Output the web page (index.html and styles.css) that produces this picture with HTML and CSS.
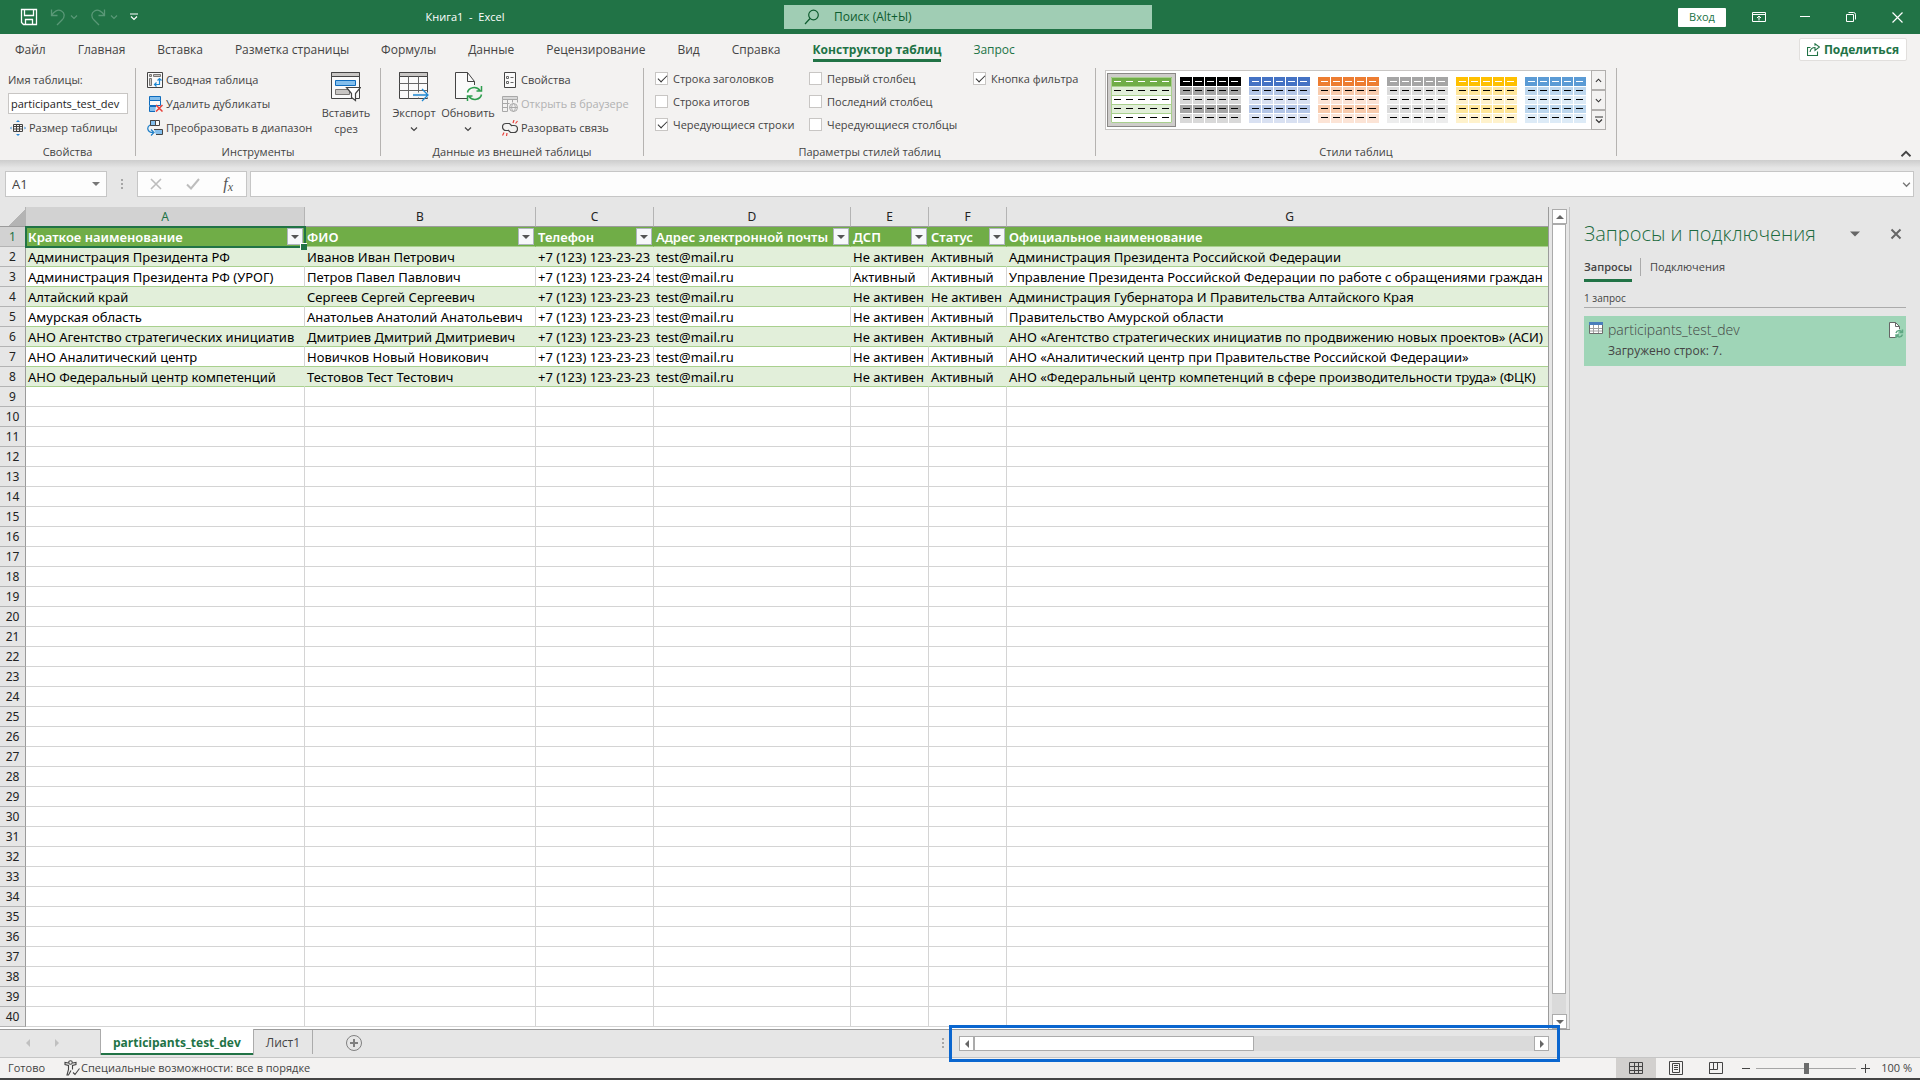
FILE: index.html
```html
<!DOCTYPE html>
<html lang="ru">
<head>
<meta charset="utf-8">
<title>Книга1 - Excel</title>
<link rel="stylesheet" href="styles.css">
</head>
<body>
<svg class="defs" width="0" height="0" aria-hidden="true">
  <symbol id="swatch" viewBox="0 0 61 46">
    <path fill="var(--head)" d="M0 0h61v9H0z"/>
    <path fill="var(--odd)" d="M0 10h61v8H0zM0 28h61v8H0z"/>
    <path fill="var(--even)" d="M0 19h61v8H0zM0 37h61v9H0z"/>
    <path stroke="var(--grid)" d="M12.500 0v46M24.500 0v46M36.500 0v46M48.500 0v46"/>
    <path stroke="#fff" stroke-dasharray="7 5" d="M3 4.500h55"/>
    <path stroke="#000" stroke-dasharray="7 5" d="M3 13.500h55M3 22.500h55M3 31.500h55M3 40.500h55"/>
    <path fill="none" stroke="var(--line)" d="M.5 9.500h60M.5 18.500h60M.5 27.500h60M.5 36.500h60M.5.5h60v45H.5z"/>
  </symbol>
  <symbol id="chev-down" viewBox="0 0 8 8"><path d="M1 2.500l3 3 3-3" fill="none" stroke="currentColor" stroke-width="1.200"/></symbol>
  <symbol id="chev-up" viewBox="0 0 8 8"><path d="M1 5.500l3-3 3 3" fill="none" stroke="currentColor" stroke-width="1.200"/></symbol>
  <symbol id="tri-down" viewBox="0 0 8 8"><path d="M0 2h8L4 6z" fill="currentColor"/></symbol>
  <symbol id="tri-up" viewBox="0 0 8 8"><path d="M0 6h8L4 2z" fill="currentColor"/></symbol>
  <symbol id="tri-left" viewBox="0 0 8 8"><path d="M6 0v8L2 4z" fill="currentColor"/></symbol>
  <symbol id="tri-right" viewBox="0 0 8 8"><path d="M2 0v8l4-4z" fill="currentColor"/></symbol>
</svg>

<header class="titlebar">
  <div class="quick">
    <button type="button" class="bare" aria-label="Сохранить"><svg width="18" height="18" viewBox="0 0 18 18" fill="none" stroke="#fff" stroke-width="1.300"><path d="M1.500 1.500h15v15h-13l-2-2zM4.500 1.500v6h9v-6M5.500 16.500v-5h7v5"/></svg></button>
    <div class="history">
      <button type="button" class="bare" aria-label="Отменить" disabled><svg width="16" height="18" viewBox="0 0 16 18" fill="none" stroke="currentColor" stroke-width="1.300"><path d="M1.500 1.500v6h6M1.500 7.500C4 3 8 1 11.500 3s3.500 6 .5 9l-5 5"/></svg></button>
      <svg width="8" height="8"><use href="#chev-down"/></svg>
    </div>
    <div class="history">
      <button type="button" class="bare" aria-label="Вернуть" disabled><svg width="16" height="18" viewBox="0 0 16 18" fill="none" stroke="currentColor" stroke-width="1.300"><path d="M14.500 1.500v6h-6M14.500 7.500C12 3 8 1 4.500 3S1 9 4 12l5 5"/></svg></button>
      <svg width="8" height="8"><use href="#chev-down"/></svg>
    </div>
    <button type="button" class="bare" aria-label="Настройка панели"><svg width="8" height="8" viewBox="0 0 8 8" fill="none" stroke="#fff" stroke-width="1.200"><path d="M0 1h8M1 3.500L4 6.500l3-3"/></svg></button>
  </div>
  <div class="doc-title">Книга1&nbsp; -&nbsp; Excel</div>
  <label class="search">
    <svg width="16" height="16" viewBox="0 0 16 16" fill="none" stroke="#0e5c2f" stroke-width="1.200"><circle cx="9.500" cy="6" r="4.800"/><path d="M6 9.500L1 15"/></svg>
    <input type="text" placeholder="Поиск (Alt+Ы)" aria-label="Поиск">
  </label>
  <div class="window">
    <button type="button" class="login">Вход</button>
    <button type="button" class="win" aria-label="Параметры ленты"><svg width="14" height="12" viewBox="0 0 14 12" fill="none" stroke="#fff"><path d="M.5 1.500h13v9H.5zM.5 3.500h13M7 9.500v-4M5 7l2-2 2 2"/></svg></button>
    <button type="button" class="win" aria-label="Свернуть"><svg width="10" height="10" viewBox="0 0 10 10" stroke="#fff"><path d="M0 4.500h10"/></svg></button>
    <button type="button" class="win" aria-label="Восстановить"><svg width="10" height="10" viewBox="0 0 10 10" fill="none" stroke="#fff"><path d="M.5 2.500h7v7h-7zM2.500.5h5q2 0 2 2v5"/></svg></button>
    <button type="button" class="win" aria-label="Закрыть"><svg width="11" height="11" viewBox="0 0 11 11" stroke="#fff" stroke-width="1.200"><path d="M.5.5l10 10M10.500.5l-10 10"/></svg></button>
  </div>
</header>

<nav class="tabs">
  <a href="#">Файл</a><a href="#">Главная</a><a href="#">Вставка</a><a href="#">Разметка страницы</a><a href="#">Формулы</a><a href="#">Данные</a><a href="#">Рецензирование</a><a href="#">Вид</a><a href="#">Справка</a><a href="#" class="active">Конструктор таблиц</a><a href="#" class="context">Запрос</a>
  <button type="button" class="share"><svg width="13" height="13" viewBox="0 0 13 13" fill="none" stroke="#217346" stroke-width="1.100"><path d="M3.500 4.500h-3v8h10v-4M3 9c.5-3 2.500-4.500 5-4.500V7.500L12.500 4 8 .8v2"/></svg>Поделиться</button>
</nav>

<section class="ribbon">
  <div class="group g-props">
    <div class="body rows">
      <label class="small" for="tname">Имя таблицы:</label>
      <input id="tname" class="tname" type="text" value="participants_test_dev">
      <button type="button" class="small resize"><svg width="16" height="16" viewBox="0 0 16 16" fill="none" stroke="#444"><path d="M3.500 4.500h9v7h-9zM3.500 6.500h9M6.500 4.500v7M9.500 4.500v7M3.500 9h9"/><path fill="#2b88d8" stroke="none" d="M8 0l2 2H6zM8 16l2-2H6zM0 8l1.500-1.500v3zM16 8l-1.500-1.500v3z"/></svg>Размер таблицы</button>
    </div>
    <div class="caption">Свойства</div>
  </div>
  <span class="sep"></span>
  <div class="group g-tools">
    <div class="body">
      <div class="rows">
        <button type="button" class="small"><svg width="16" height="16" viewBox="0 0 16 16" fill="none" stroke="#444"><path d="M.5.5h15v15H.5z" fill="#fafafa"/><path d="M2.500 2.500h2v2h-2zM6.500 2.500h7v2h-7zM2.500 6.500h2v7h-2z" fill="#c8c6c4" stroke="#797775"/><path stroke="#1e88d2" stroke-width="1.200" d="M12.500 7v5.500H8M10.500 8.500l2-2 2 2M9.500 10.500l-2 2 2 2"/></svg>Сводная таблица</button>
        <button type="button" class="small"><svg width="16" height="16" viewBox="0 0 16 16" fill="none" stroke="#0f6cbd"><path d="M2.500.5h11v4h-11z" fill="#83beec"/><path d="M2.500 4.500h11v5h-11z" fill="#fafafa"/><path d="M8 15.500H2.500v-5H9" fill="#83beec"/><path stroke="#e8403a" stroke-width="1.500" d="M9 9l6.500 6.500M15.500 9L9 15.500"/></svg>Удалить дубликаты</button>
        <button type="button" class="small"><svg width="16" height="16" viewBox="0 0 16 16" fill="none" stroke="#444"><path d="M3.500.5h9v5h-9z" fill="#fafafa"/><path d="M3.500.5h5v5h-5z" fill="#83beec"/><path d="M7 9.500h8.500v5H9" fill="#83beec"/><path stroke="#1e7fc8" stroke-width="1.200" d="M3 5C-.5 7 0 12.500 6 12.500M4 9.500l3 3-3 3"/></svg>Преобразовать в диапазон</button>
      </div>
      <button type="button" class="big"><svg width="30" height="32" viewBox="0 0 30 32" fill="none" stroke="#444"><path d="M.5 1.500h28v26H.5z" fill="#fafafa"/><path d="M.5 1.500h28v4H.5z" fill="#c8c6c4"/><path d="M4.500 9.500h20v5h-20z" fill="#83beec" stroke="#0f6cbd"/><path d="M4.500 18.500h14v5h-14z" fill="#c8c6c4" stroke="#797775"/><path d="M15.500 16.500h14l-5 6v7l-4-3v-4z" fill="#fff" stroke-width="1.200"/></svg><span>Вставить<br>срез</span></button>
    </div>
    <div class="caption">Инструменты</div>
  </div>
  <span class="sep"></span>
  <div class="group g-data">
    <div class="body">
      <button type="button" class="big"><svg width="30" height="32" viewBox="0 0 30 32" fill="none" stroke="#444"><path d="M.5 1.500h28v26H.5z" fill="#fafafa"/><path d="M.5 1.500h28v4H.5z" fill="#c8c6c4"/><path stroke="#666" d="M.5 12.500h28M.5 19.500h28M9.500 5.500v22M19.500 5.500v22"/><path stroke="#f3f2f1" stroke-width="5" d="M14 24h16"/><path stroke="#1e88d2" stroke-width="1.300" d="M14 24h15M23 18l6 6-6 6"/></svg><span>Экспорт</span><svg width="8" height="8"><use href="#chev-down"/></svg></button>
      <button type="button" class="big"><svg width="30" height="32" viewBox="0 0 30 32" fill="none" stroke="#444"><path d="M15 27.500H2.500v-26h12l7 9V14" fill="#fafafa"/><path d="M14.500 1.500v9h7"/><path stroke="#2f9e4f" stroke-width="1.500" d="M14.500 21.500c1-5 8.500-7 12.500-2M28.500 15v5h-5M28.500 23.500c-1 5-8.500 7-12.500 2M14.500 30v-5h5"/></svg><span>Обновить</span><svg width="8" height="8"><use href="#chev-down"/></svg></button>
      <div class="rows">
        <button type="button" class="small"><svg width="16" height="16" viewBox="0 0 16 16" fill="none" stroke="#444"><path d="M2.500.5h11v15h-11z" fill="#fafafa"/><path stroke="#666" d="M4.500 4.500h2v2h-2zM4.500 9.500h2v2h-2zM8.500 5.500h3M8.500 10.500h3"/></svg>Свойства</button>
        <button type="button" class="small" disabled><svg width="16" height="16" viewBox="0 0 16 16" fill="none" stroke="#a8a8a8"><path d="M.5.500h15v3H.5z" fill="#d8d8d8"/><path d="M.5 3.500v12h5M.5 7.500h7M.5 11.500h5M5.500 3.500v12M10.500 3.500v3M15.500 3.500v3"/><circle cx="11.500" cy="11.500" r="4" fill="#f3f2f1"/><path d="M7.500 11.500h8M11.500 7.500c-2.500 2.500-2.500 5.500 0 8 2.500-2.500 2.500-5.500 0-8"/></svg>Открыть в браузере</button>
        <button type="button" class="small"><svg width="16" height="16" viewBox="0 0 16 16" fill="none" stroke="#444" stroke-width="1.200"><path d="M7 10.500H4a3.500 3.500 0 010-7h3.500L10 6M9 5.500h3a3.500 3.500 0 010 7H8.500L6 10"/><path stroke="#e8403a" d="M11 3l1-3M13.500 3.500L15.500 1M2 12.500L.5 15.500M5 13l-.5 3"/></svg>Разорвать связь</button>
      </div>
    </div>
    <div class="caption">Данные из внешней таблицы</div>
  </div>
  <span class="sep"></span>
  <div class="group g-options">
    <div class="body checks">
      <label><input type="checkbox" checked>Строка заголовков</label>
      <label><input type="checkbox">Строка итогов</label>
      <label><input type="checkbox" checked>Чередующиеся строки</label>
      <label><input type="checkbox">Первый столбец</label>
      <label><input type="checkbox">Последний столбец</label>
      <label><input type="checkbox">Чередующиеся столбцы</label>
      <label><input type="checkbox" checked>Кнопка фильтра</label>
    </div>
    <div class="caption">Параметры стилей таблиц</div>
  </div>
  <span class="sep"></span>
  <div class="group g-styles">
    <div class="body">
      <div class="gallery">
        <button type="button" class="style green selected" aria-label="Зелёный"><svg width="61" height="46"><use href="#swatch"/></svg></button>
        <button type="button" class="style black" aria-label="Чёрный"><svg width="61" height="46"><use href="#swatch"/></svg></button>
        <button type="button" class="style blue" aria-label="Синий"><svg width="61" height="46"><use href="#swatch"/></svg></button>
        <button type="button" class="style orange" aria-label="Оранжевый"><svg width="61" height="46"><use href="#swatch"/></svg></button>
        <button type="button" class="style gray" aria-label="Серый"><svg width="61" height="46"><use href="#swatch"/></svg></button>
        <button type="button" class="style yellow" aria-label="Жёлтый"><svg width="61" height="46"><use href="#swatch"/></svg></button>
        <button type="button" class="style sky" aria-label="Голубой"><svg width="61" height="46"><use href="#swatch"/></svg></button>
        <div class="stepper">
          <button type="button" aria-label="Вверх"><svg width="7" height="7"><use href="#chev-up"/></svg></button>
          <button type="button" aria-label="Вниз"><svg width="7" height="7"><use href="#chev-down"/></svg></button>
          <button type="button" aria-label="Ещё"><svg width="8" height="8" viewBox="0 0 8 8" fill="none" stroke="currentColor" stroke-width="1.200"><path d="M0 1h8M1 3.500L4 6.500l3-3"/></svg></button>
        </div>
      </div>
    </div>
    <div class="caption">Стили таблиц</div>
  </div>
  <span class="sep"></span>
  <button type="button" class="bare collapse" aria-label="Свернуть ленту"><svg width="12" height="12"><use href="#chev-up"/></svg></button>
</section>

<div class="formula-row">
  <div class="box name-box"><input type="text" value="A1" aria-label="Имя"><svg width="8" height="8"><use href="#tri-down"/></svg></div>
  <svg class="dots" width="3" height="12" viewBox="0 0 3 12" fill="#a6a6a6"><path d="M0 1h2v2H0zM0 5h2v2H0zM0 9h2v2H0z"/></svg>
  <div class="box fx">
    <svg width="12" height="12" viewBox="0 0 12 12" stroke="#bdbdbd" stroke-width="1.600"><path d="M1 1l10 10M11 1L1 11"/></svg>
    <svg width="14" height="12" viewBox="0 0 14 12" fill="none" stroke="#bdbdbd" stroke-width="2"><path d="M1 6.500l4 4L13 1"/></svg>
    <span class="fx-label">f<sub>x</sub></span>
  </div>
  <div class="box formula"><input type="text" aria-label="Строка формул"><svg width="9" height="9"><use href="#chev-down"/></svg></div>
</div>

<main class="workspace">
  <section class="book">
    <div class="sheet-area">
      <div class="sheet">
        <table>
          <colgroup><col class="c-num"><col class="c-a"><col class="c-b"><col class="c-c"><col class="c-d"><col class="c-e"><col class="c-f"><col></colgroup>
          <thead>
            <tr class="letters"><th class="corner"></th><th class="current">A</th><th>B</th><th>C</th><th>D</th><th>E</th><th>F</th><th>G</th></tr>
          </thead>
          <tbody id="grid">
            <tr class="names"><th class="current">1</th><td class="cell-active">Краткое наименование<button type="button" class="filter" aria-label="Фильтр"><svg width="8" height="8"><use href="#tri-down"/></svg></button></td><td>ФИО<button type="button" class="filter" aria-label="Фильтр"><svg width="8" height="8"><use href="#tri-down"/></svg></button></td><td>Телефон<button type="button" class="filter" aria-label="Фильтр"><svg width="8" height="8"><use href="#tri-down"/></svg></button></td><td>Адрес электронной почты<button type="button" class="filter" aria-label="Фильтр"><svg width="8" height="8"><use href="#tri-down"/></svg></button></td><td>ДСП<button type="button" class="filter" aria-label="Фильтр"><svg width="8" height="8"><use href="#tri-down"/></svg></button></td><td>Статус<button type="button" class="filter" aria-label="Фильтр"><svg width="8" height="8"><use href="#tri-down"/></svg></button></td><td>Официальное наименование</td></tr>
            <tr class="data band"><th>2</th><td>Администрация Президента РФ</td><td>Иванов Иван Петрович</td><td>+7 (123) 123-23-23</td><td>test@mail.ru</td><td>Не активен</td><td>Активный</td><td>Администрация Президента Российской Федерации</td></tr>
            <tr class="data"><th>3</th><td>Администрация Президента РФ (УРОГ)</td><td>Петров Павел Павлович</td><td>+7 (123) 123-23-24</td><td>test@mail.ru</td><td>Активный</td><td>Активный</td><td>Управление Президента Российской Федерации по работе с обращениями граждан</td></tr>
            <tr class="data band"><th>4</th><td>Алтайский край</td><td>Сергеев Сергей Сергеевич</td><td>+7 (123) 123-23-23</td><td>test@mail.ru</td><td>Не активен</td><td>Не активен</td><td>Администрация Губернатора И Правительства Алтайского Края</td></tr>
            <tr class="data"><th>5</th><td>Амурская область</td><td>Анатольев Анатолий Анатольевич</td><td>+7 (123) 123-23-23</td><td>test@mail.ru</td><td>Не активен</td><td>Активный</td><td>Правительство Амурской области</td></tr>
            <tr class="data band"><th>6</th><td>АНО Агентство стратегических инициатив</td><td>Дмитриев Дмитрий Дмитриевич</td><td>+7 (123) 123-23-23</td><td>test@mail.ru</td><td>Не активен</td><td>Активный</td><td>АНО «Агентство стратегических инициатив по продвижению новых проектов» (АСИ)</td></tr>
            <tr class="data"><th>7</th><td>АНО Аналитический центр</td><td>Новичков Новый Новикович</td><td>+7 (123) 123-23-23</td><td>test@mail.ru</td><td>Не активен</td><td>Активный</td><td>АНО «Аналитический центр при Правительстве Российской Федерации»</td></tr>
            <tr class="data band"><th>8</th><td>АНО Федеральный центр компетенций</td><td>Тестовов Тест Тестович</td><td>+7 (123) 123-23-23</td><td>test@mail.ru</td><td>Не активен</td><td>Активный</td><td>АНО «Федеральный центр компетенций в сфере производительности труда» (ФЦК)</td></tr>
          </tbody>
        </table>
      </div>
      <div class="vscroll">
        <button type="button" aria-label="Вверх"><svg width="8" height="8"><use href="#tri-up"/></svg></button>
        <div class="vtrack"><div class="vthumb"></div></div>
        <button type="button" aria-label="Вниз"><svg width="8" height="8"><use href="#tri-down"/></svg></button>
      </div>
    </div>
    <div class="sheetbar">
      <div class="tab-arrows"><svg width="8" height="8"><use href="#tri-left"/></svg><svg width="8" height="8"><use href="#tri-right"/></svg></div>
      <a href="#" class="sheet-tab on">participants_test_dev</a>
      <a href="#" class="sheet-tab">Лист1</a>
      <button type="button" class="bare add" aria-label="Новый лист"><svg width="18" height="18" viewBox="0 0 18 18" fill="none" stroke="#808080"><circle cx="9" cy="9" r="7.500"/><path stroke-width="2" d="M9 5v8M5 9h8"/></svg></button>
      <svg class="dots grip" width="3" height="12" viewBox="0 0 3 12" fill="#a6a6a6"><path d="M0 1h2v2H0zM0 5h2v2H0zM0 9h2v2H0z"/></svg>
      <div class="hscroll">
        <button type="button" aria-label="Влево"><svg width="8" height="8"><use href="#tri-left"/></svg></button>
        <div class="htrack"><div class="hthumb"></div></div>
        <button type="button" aria-label="Вправо"><svg width="8" height="8"><use href="#tri-right"/></svg></button>
        <span class="marker"></span>
      </div>
    </div>
  </section>
  <aside class="pane">
    <div class="pane-head">
      <h2>Запросы и подключения</h2>
      <svg width="10" height="10"><use href="#tri-down"/></svg>
      <button type="button" class="bare" aria-label="Закрыть"><svg width="12" height="12" viewBox="0 0 12 12" stroke="#666" stroke-width="2"><path d="M1.500 1.500l9 9M10.500 1.500l-9 9"/></svg></button>
    </div>
    <div class="pane-tabs"><a href="#" class="on">Запросы</a><a href="#">Подключения</a></div>
    <div class="count">1 запрос</div>
    <div class="query">
      <svg width="14" height="14" viewBox="0 0 14 14" fill="none" stroke="#6b6b6b"><path d="M.5 1.500h13v11H.5z" fill="#fff"/><path stroke="#a0a0a0" d="M1 7.500h12M1 10h12M4.500 4v8M9.500 4v8"/><path fill="#4a7ebb" stroke="none" d="M0 1h14v3H0z"/></svg>
      <div class="query-text"><div class="query-name">participants_test_dev</div><div>Загружено строк: 7.</div></div>
      <svg width="16" height="18" viewBox="0 0 16 18" fill="none" stroke="#666"><path d="M8 16.500H1.500v-15h6l4 4V8" fill="#fff"/><path d="M7.500 1.500v4h4"/><path stroke="#5fa783" stroke-width="1.500" d="M8 12c1-3 4-3 6-1M14.500 8.500v3h-3M14.500 13.500c-1 3-4 3-6 1M8 17v-3h3"/></svg>
    </div>
  </aside>
</main>

<footer class="status">
  <span>Готово</span>
  <button type="button" class="bare access"><svg width="16" height="16" viewBox="0 0 16 16" fill="none" stroke="#444" stroke-width="1.100"><circle cx="6.500" cy="2.500" r="1.800"/><path d="M4.500 3L1 2.500v2l3.500 1v4L3 15h1.500L7 10.500M8.500 3L12 2.500v2l-3.500 1v4M9 12.500l2 2 4.500-6"/></svg>Специальные возможности: все в порядке</button>
  <div class="views">
    <button type="button" class="view on" aria-label="Обычный"><svg width="14" height="14" viewBox="0 0 14 14" fill="none" stroke="#444"><path d="M.5 1.500h13v11H.5zM.5 5.500h13M.5 9.500h13M5.500 1.500v11M9.500 1.500v11"/></svg></button>
    <button type="button" class="view" aria-label="Разметка страницы"><svg width="14" height="14" viewBox="0 0 14 14" fill="none" stroke="#444"><path d="M.5.5h13v13H.5zM3.500 2.500h7v9h-7zM5 4.500h4M5 6.500h4M5 8.500h4"/></svg></button>
    <button type="button" class="view" aria-label="Страничный режим"><svg width="14" height="14" viewBox="0 0 14 14" fill="none" stroke="#444"><path d="M.5 13V1.500h13v11H.5M.5 8.500h8v-7M4.500 1.500v7"/></svg></button>
  </div>
  <div class="zoom">
    <button type="button" class="bare" aria-label="Уменьшить"><svg width="9" height="9" viewBox="0 0 9 9" stroke="#444"><path d="M0 4.500h8"/></svg></button>
    <input type="range" min="0" max="100" value="50" aria-label="Масштаб">
    <button type="button" class="bare" aria-label="Увеличить"><svg width="9" height="9" viewBox="0 0 9 9" stroke="#444"><path d="M0 4.500h9M4.500 0v9"/></svg></button>
    <span>100 %</span>
  </div>
</footer>
<script src="script.js"></script>
</body>
</html>
```
FILE: styles.css
```css
* { box-sizing: border-box; }
body {
  margin: 0;
  height: 100vh;
  display: flex;
  flex-direction: column;
  overflow: hidden;
  background: #e6e6e6;
  color: #444;
  font: 11px/16px "Open Sans", "Noto Sans", sans-serif;
}
button, input { font: inherit; color: inherit; }
button { padding: 0; border: 0; background: none; }
input { border: 0; outline: 0; padding: 0; min-width: 0; }
a { color: inherit; text-decoration: none; }
svg { display: block; flex: none; }
.defs { position: absolute; }
.bare { display: flex; align-items: center; }

/* Title bar */
.titlebar {
  flex: none;
  height: 34px;
  display: grid;
  grid-template-columns: 358px 214px 212px minmax(200px, 368px) 1fr;
  align-items: center;
  background: #217346;
  color: #fff;
  font-size: 12px;
}
.quick { display: flex; align-items: center; gap: 12px; padding-left: 20px; }
.history { display: flex; align-items: center; gap: 4px; color: #5a9877; }
.history .bare { color: inherit; }
.doc-title { text-align: center; font-size: 11px; }
.search {
  grid-column: 4;
  height: 24px;
  display: flex;
  align-items: center;
  gap: 14px;
  padding-left: 20px;
  background: #a0cdb4;
}
.search input { flex: 1; background: none; color: #0e5c2f; font-size: 12px; }
.search input::placeholder { color: #0e5c2f; opacity: 1; }
.window { display: flex; align-items: center; justify-content: flex-end; }
.login { width: 48px; height: 19px; margin-right: 10px; background: #fff; color: #217346; font-size: 11px; border-radius: 1px; }
.win { width: 46px; height: 34px; display: grid; place-items: center; }

/* Ribbon tabs */
.tabs {
  flex: none;
  height: 34px;
  display: flex;
  align-items: flex-start;
  gap: 32px;
  padding: 0 13px 0 15px;
  background: #f3f2f1;
  font-size: 12px;
}
.tabs a { margin-top: 8px; padding-bottom: 1px; border-bottom: 3px solid transparent; white-space: nowrap; }
.tabs .active { color: #217346; font-weight: 700; border-color: #217346; }
.tabs .context { color: #217346; }
.share {
  margin: 4px 0 0 auto;
  height: 23px;
  display: flex;
  align-items: center;
  gap: 4px;
  padding: 0 7px;
  background: #fff;
  border: 1px solid #e1dfdd;
  border-radius: 2px;
  color: #217346;
  font-weight: 700;
}

/* Ribbon body */
.ribbon { flex: none; height: 92px; display: flex; background: #f3f2f1; }
.sep { flex: none; width: 1px; height: 88px; background: #b5b3b1; }
.group { flex: none; display: flex; flex-direction: column; }
.body { flex: 1; display: flex; }
.caption { height: 16px; text-align: center; }
.g-props { width: 135px; padding: 0 8px; }
.g-tools { width: 244px; }
.g-data { width: 262px; }
.g-options { width: 451px; }
.g-styles { width: 520px; }
.rows { display: flex; flex-direction: column; }
.small { height: 24px; display: flex; align-items: center; gap: 3px; white-space: nowrap; }
.small:disabled { color: #b1b1b1; }
.resize { padding-left: 2px; }
.tname { width: 120px; height: 21px; margin: 1px 0 2px; padding-left: 2px; background: #fff; border: 1px solid #c8c6c4; color: #222; }
.g-tools .rows { width: 177px; padding-left: 11px; }
.g-tools .big { width: 66px; }
.big { display: flex; flex-direction: column; align-items: center; padding-top: 3px; }
.big span { margin-top: 2px; }
.big span + svg { margin-top: 4px; }
.g-data .big { width: 54px; }
.g-data .body { padding-left: 6px; }
.g-data .rows { padding-left: 7px; }
.checks {
  display: grid;
  grid-auto-flow: column;
  grid-template: repeat(3, 23px) / 154px 164px auto;
  margin-top: -1px;
  padding-left: 11px;
}
.checks label { display: flex; align-items: center; gap: 5px; white-space: nowrap; }
input[type="checkbox"] { appearance: none; flex: none; width: 13px; height: 13px; margin: 0; background: #fff; border: 1px solid #c8c6c4; }
input[type="checkbox"]:checked::after {
  content: "";
  display: block;
  width: 8px;
  height: 4px;
  margin: 2px 0 0 2px;
  border: solid #333;
  border-width: 0 0 1px 1px;
  transform: rotate(-45deg);
}
.g-styles .body { padding: 2px 10px 0 9px; }
.gallery { flex: 1; height: 60px; display: flex; padding: 2px 0 2px 1px; background: #fff; border: 1px solid #c8c6c4; }
.style { width: 69px; height: 54px; display: grid; place-items: center; --grid: #fff; --line: transparent; }
.selected { background: #cfcdcb; outline: 1px solid #8a8886; outline-offset: -1px; }
.green { --head: #70ad47; --odd: #e2efda; --even: #fff; --grid: transparent; --line: #a9d08e; }
.black { --head: #000; --odd: #a6a6a6; --even: #d9d9d9; }
.blue { --head: #4472c4; --odd: #b4c6e7; --even: #d9e1f2; }
.orange { --head: #ed7d31; --odd: #f8cbad; --even: #fce4d6; }
.gray { --head: #a5a5a5; --odd: #dbdbdb; --even: #ededed; }
.yellow { --head: #ffc000; --odd: #ffe699; --even: #fff2cc; }
.sky { --head: #5b9bd5; --odd: #bdd7ee; --even: #ddebf7; }
.stepper { flex: none; width: 15px; margin: -3px -1px -3px auto; display: flex; flex-direction: column; }
.stepper button { flex: 1; display: grid; place-items: center; background: #f3f2f1; border: 1px solid #b1afad; color: #333; }
.collapse { margin: auto 8px 0 auto; }

/* Formula bar */
.formula-row {
  flex: none;
  height: 47px;
  display: flex;
  padding: 11px 6px 10px 5px;
  background: linear-gradient(#cdcdcd, #e6e6e6 8px);
}
.box { height: 26px; display: flex; align-items: center; background: #fdfdfd; border: 1px solid #c6c6c6; color: #777; }
.name-box { width: 102px; padding: 0 6px; }
.name-box input { flex: 1; font-size: 13px; color: #444; background: none; }
.formula-row .dots { margin: 7px 13px 0 14px; }
.fx { width: 110px; padding: 0 13px 0 12px; justify-content: space-between; }
.fx-label { font: italic 16px/20px "Liberation Serif", serif; color: #555; }
.fx-label sub { font-size: 12px; line-height: 1px; vertical-align: -2px; }
.formula { flex: 1; margin-left: 3px; padding-right: 2px; }
.formula input { flex: 1; background: none; }

/* Workbook */
.workspace { flex: 1; display: flex; min-height: 0; }
.book { flex: 1; min-width: 0; display: flex; flex-direction: column; }
.sheet-area { flex: 1; min-height: 0; display: flex; }
.sheet { flex: 1; min-width: 0; overflow: hidden; background: #fff; border-right: 1px solid #9b9b9b; }
table { width: 100%; table-layout: fixed; border-collapse: separate; border-spacing: 0; font: 13px/18px "Noto Sans", "Open Sans", sans-serif; color: #000; }
.c-num { width: 26px; }
.c-a { width: 279px; }
.c-b { width: 231px; }
.c-c { width: 118px; }
.c-d { width: 197px; }
.c-e, .c-f { width: 78px; }
tr { height: 20px; }
td { height: 20px; padding: 0 0 0 2px; border: solid #d4d4d4; border-width: 0 1px 1px 0; white-space: nowrap; overflow: hidden; }
th { height: 20px; padding: 0; font-weight: 400; font-size: 12px; color: #222; background: #e6e6e6; border: solid #b4b4b4; border-width: 0 1px 1px 0; }
tbody th { border-right-color: #9b9b9b; }
.letters th { border-bottom-color: #9b9b9b; }
.letters th:last-child, td:last-child { border-right: 0; }
.letters th:last-child { padding-left: 24px; }
th.current { background: #d2d2d2; color: #217346; }
.corner { background: linear-gradient(135deg, #e6e6e6 63%, #b4b4b4 63%); }
.names td { position: relative; background: #70ad47; border-color: #a9d08e; border-right-color: #70ad47; color: #fff; font-weight: 600; }
.data td { border-bottom-color: #a9d08e; }
.band td { background: #e2efda; border-right-color: #e2efda; }
.names .cell-active { overflow: visible; }
.cell-active::before { content: ""; position: absolute; z-index: 1; inset: -1px -2px -2px -1px; border: 2px solid #217346; pointer-events: none; }
.cell-active::after { content: ""; position: absolute; z-index: 1; right: -3px; bottom: -4px; width: 6px; height: 6px; background: #217346; border: 1px solid #fff; border-width: 1px 0 0 1px; }
.filter { position: absolute; top: 1px; right: 1px; width: 16px; height: 17px; display: grid; place-items: center; background: #f7f8fa; border: 1px solid #b0b5bf; color: #555; }

.vscroll { flex: none; width: 21px; display: flex; flex-direction: column; padding: 2px 3px 0; border-right: 1px solid #c3c3c3; }
.vscroll button, .hscroll button { flex: none; width: 15px; height: 15px; display: grid; place-items: center; background: #fff; border: 1px solid #ababab; color: #666; }
.vtrack { flex: 1; background: #dadada; }
.vthumb { height: calc(100% - 20px); background: #fff; border: 1px solid #ababab; }

.sheetbar { flex: none; height: 29px; display: flex; align-items: flex-start; padding-right: 21px; border-top: 1px solid #9b9b9b; border-bottom: 1px solid #c6c6c6; }
.tab-arrows { width: 100px; height: 26px; display: flex; align-items: center; gap: 21px; padding-left: 24px; color: #c0c0c0; }
.sheet-tab { height: 24px; padding: 0 12px; line-height: 26px; font-size: 12px; border-right: 1px solid #ababab; }
.sheet-tab.on { height: 26px; margin-top: -1px; line-height: 28px; background: #fff; border: solid #ababab; border-width: 0 1px; box-shadow: inset 0 -2px #217346; color: #217346; font-weight: 700; }
.add { height: 26px; margin-left: 32px; }
.grip { margin: 7px 14px 0 auto; }
.hscroll { position: relative; width: 590px; display: flex; margin-top: 6px; }
.htrack { flex: 1; background: #dadada; }
.hthumb { width: 50%; height: 15px; background: #fff; border: 1px solid #ababab; }
.marker { position: absolute; inset: -11px -11px -11px -10px; border: 3px solid #0a66cf; pointer-events: none; }

/* Queries pane */
.pane { flex: none; width: 350px; padding: 15px 14px 0; border-bottom: 1px solid #c6c6c6; }
.pane-head { display: flex; align-items: center; color: #666; }
.pane-head h2 { flex: 1; margin: 0; font-size: 20px; line-height: 24px; font-weight: 300; color: #1c6b40; }
.pane-head .bare { margin: 0 4px 0 30px; }
.pane-tabs { display: flex; margin-top: 12px; line-height: 18px; }
.pane-tabs a { padding-left: 9px; }
.pane-tabs .on { position: relative; padding: 0 8px 0 0; border-right: 1px solid #ababab; font-weight: 600; }
.pane-tabs .on::after { content: ""; position: absolute; left: 0; right: 8px; bottom: -6px; height: 3px; background: #217346; }
.count { margin-top: 14px; padding-bottom: 1px; border-bottom: 1px solid #ababab; font-size: 10px; }
.query { display: flex; align-items: flex-start; gap: 5px; margin-top: 8px; height: 50px; padding: 5px 2px 0 5px; background: #9fd5b7; }
.query-text { flex: 1; line-height: 24px; font-size: 12px; }
.query-name { line-height: 18px; font-size: 14px; font-weight: 300; }

/* Status bar */
.status { flex: none; height: 22px; display: flex; align-items: center; padding: 0 8px; background: #f3f2f1; border-bottom: 2px solid #444; }
.access { margin-left: 19px; gap: 1px; }
.views { display: flex; margin-left: auto; }
.view { width: 40px; height: 20px; display: grid; place-items: center; }
.view.on { background: #d2d0ce; }
.zoom { display: flex; align-items: center; gap: 5px; margin-left: 6px; }
.zoom span { margin-left: 6px; }
input[type="range"] { appearance: none; width: 100px; height: 12px; margin: 0; background: linear-gradient(#a6a6a6, #a6a6a6) center / 100% 1px no-repeat; }
input[type="range"]::-webkit-slider-thumb { appearance: none; width: 5px; height: 11px; background: #6b6b6b; }
```
FILE: script.js
```js
// Fills the sheet with empty numbered rows below the data.
const grid = document.getElementById("grid");
for (let n = 9; n <= 40; n++) {
  const row = grid.insertRow();
  const head = document.createElement("th");
  head.textContent = n;
  row.append(head);
  for (let c = 0; c < 7; c++) row.insertCell();
}
```
